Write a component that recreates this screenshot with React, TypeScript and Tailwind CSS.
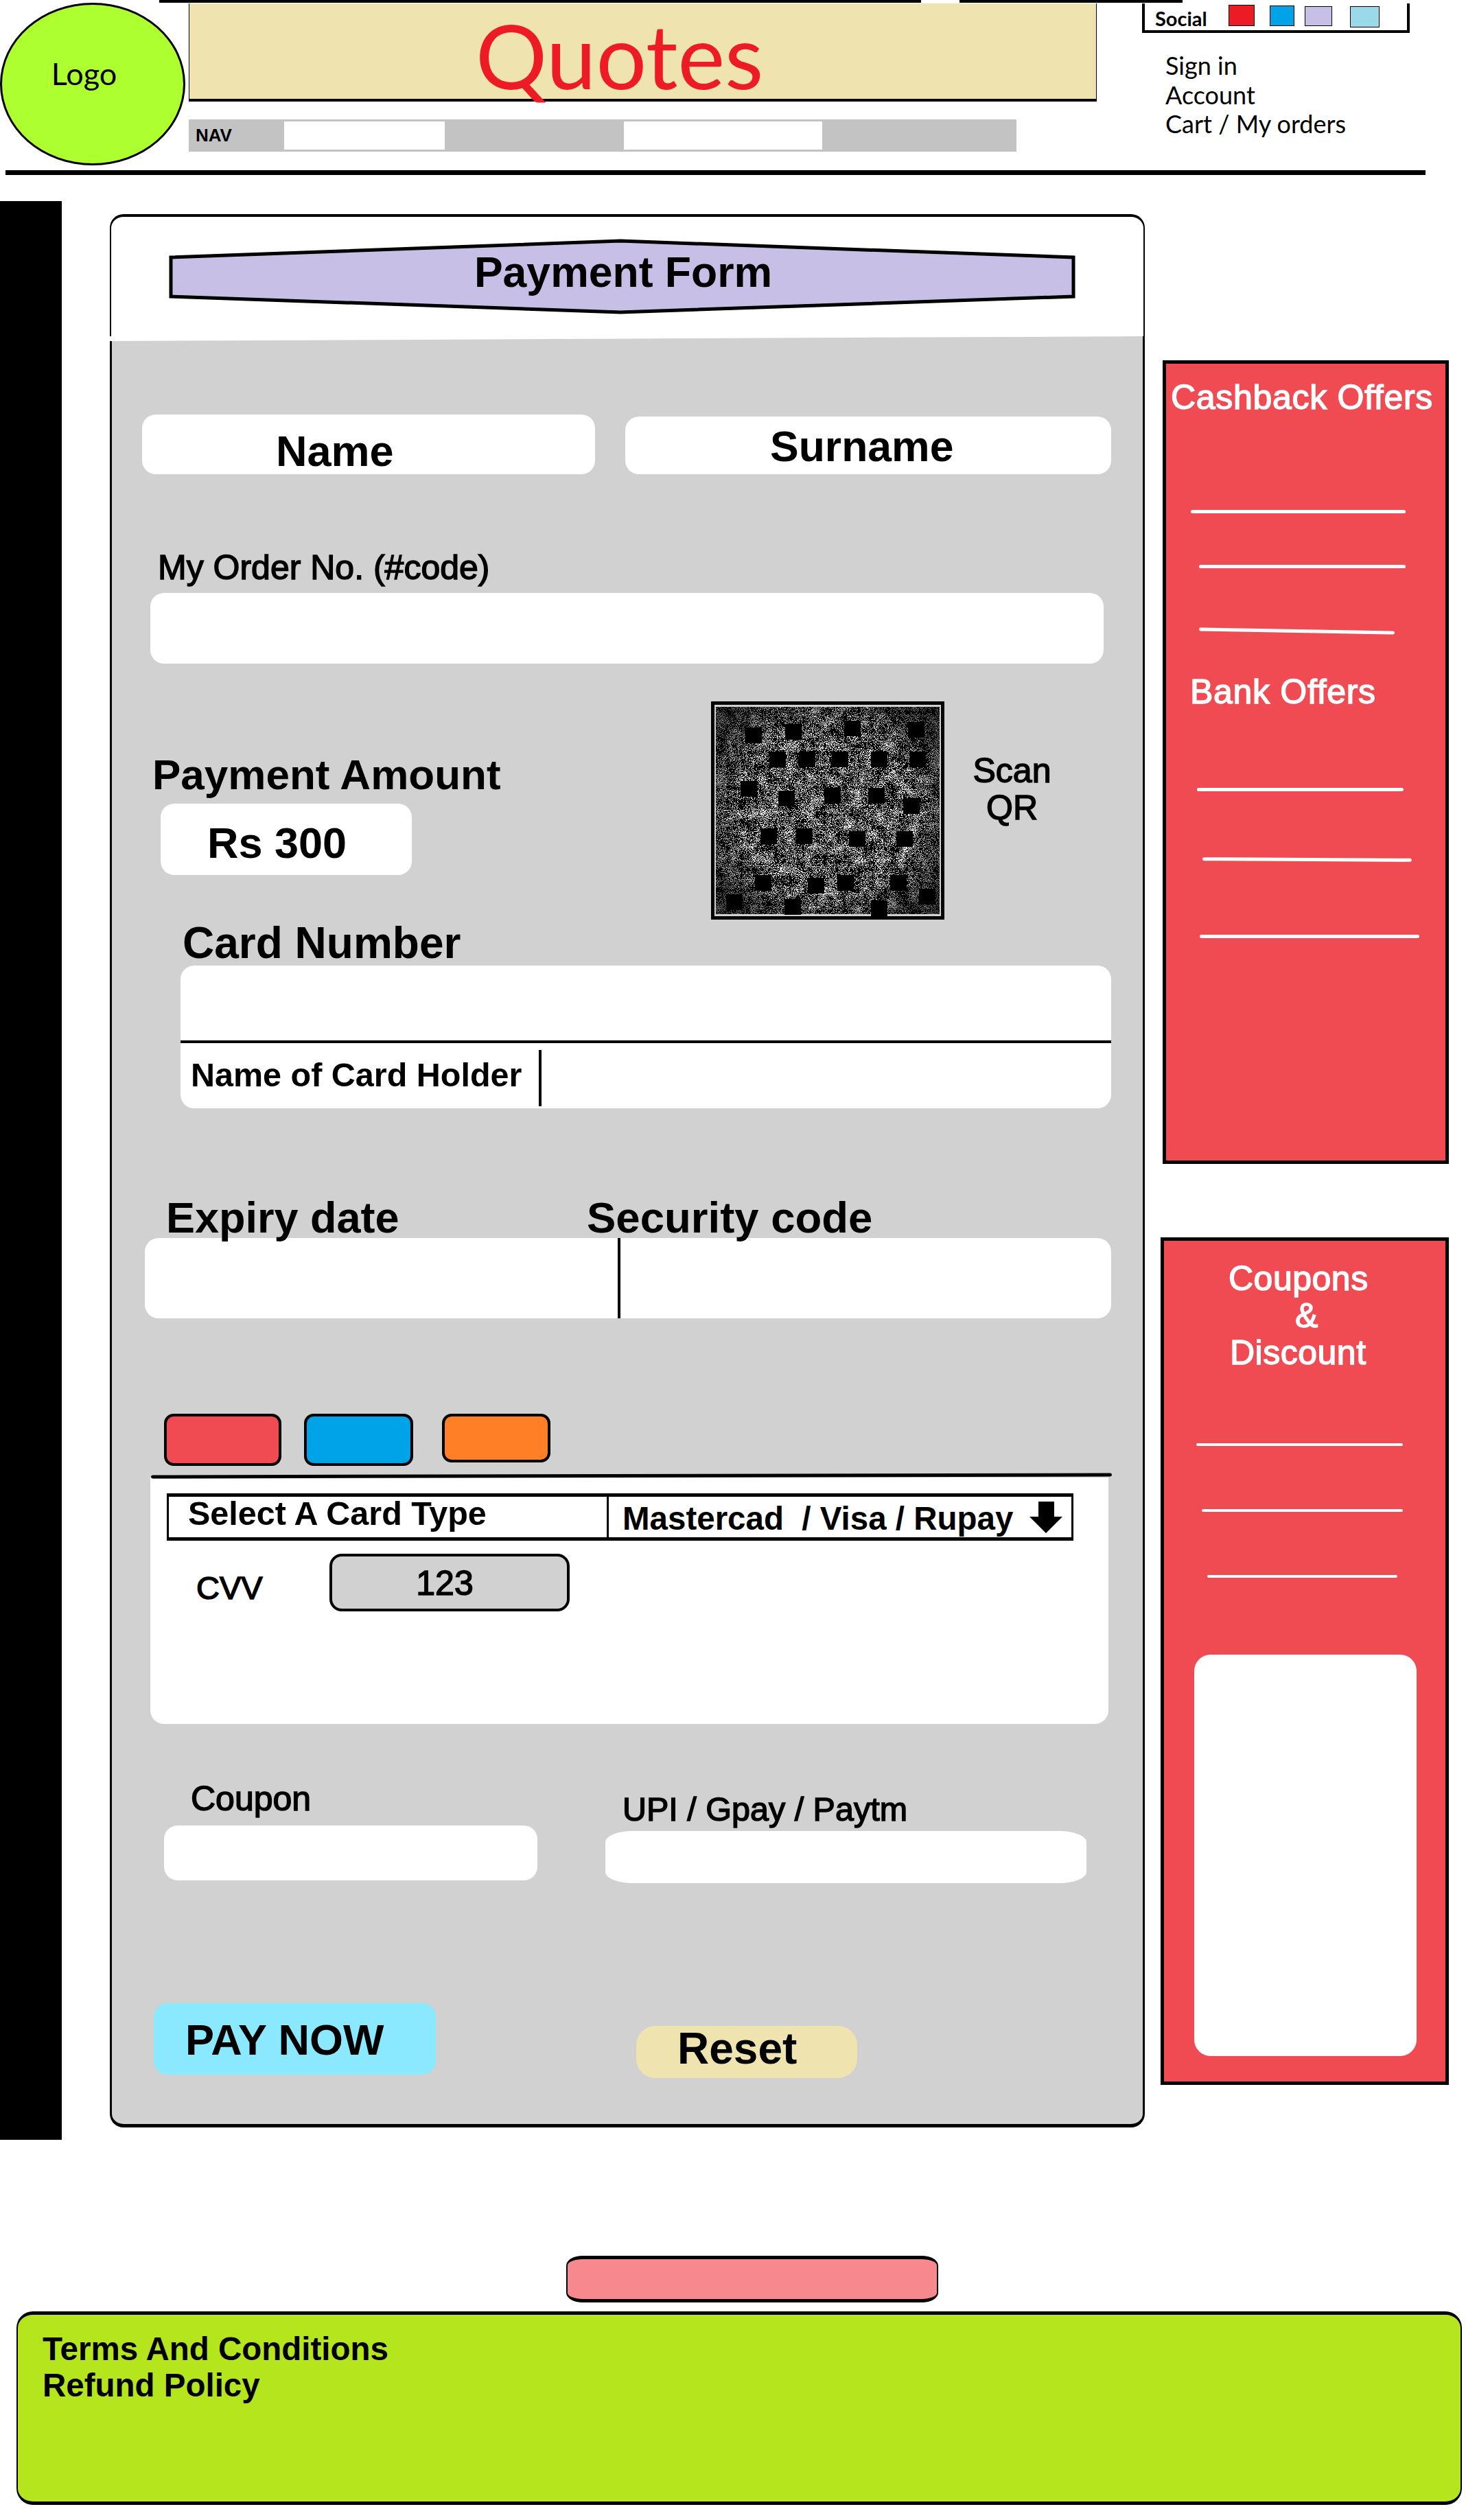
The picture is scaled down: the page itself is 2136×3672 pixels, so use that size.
const qrBlocks = [
  [45, 33], [103, 28], [189, 23], [282, 25],
  [80, 68], [123, 68], [171, 68], [228, 68], [284, 68],
  [38, 111], [93, 125], [160, 121], [224, 121], [275, 136],
  [67, 180], [119, 180], [196, 184], [265, 184],
  [59, 248], [136, 252], [179, 248], [256, 248],
  [17, 276], [102, 283], [228, 285], [298, 268],
]

const Header = () => (
  <header className="h-[255px]">
    {/* Top edge strokes */}
    <div className="flex h-[5px]">
      <div className="ml-[232px] h-[4px] w-[1110px] bg-black" />
      <div className="ml-[56px] h-[4px] w-[325px] bg-black" />
    </div>

    <div className="flex h-[243px] items-start">
      <div className="-mt-px flex h-[237px] w-[270px] items-center justify-center rounded-[50%] border-[3px] border-black bg-[#adff2f] pb-[30px] pr-[25px] font-['Lato',sans-serif] text-[45px] text-black">
        Logo
      </div>

      <div className="ml-[5px] w-[1323px]">
        <div className="h-[143px] border-x border-b-4 border-black bg-[#efe4b0] pl-[417px] pt-[10px] font-['Lato',sans-serif] text-[130px] leading-none text-[#ed1c24]">
          Quotes
        </div>
        <div className="mt-[26px] flex h-[47px] w-[1206px] items-center bg-[#c3c3c3]">
          <span className="ml-[10px] w-[129px] text-[26px] font-bold text-black">NAV</span>
          <div className="h-[41px] w-[234px] bg-white" />
          <div className="ml-[261px] h-[41px] w-[289px] bg-white" />
        </div>
      </div>

      <div className="ml-[66px]">
        <div className="flex h-[43px] w-[390px] items-start border-x-4 border-b-4 border-black">
          <span className="ml-[15px] mt-[5px] w-[107px] font-['Lato',sans-serif] text-[29px] font-bold leading-[34px] text-black">Social</span>
          <div className="mt-[2px] h-[31px] w-[38px] border border-black bg-[#ed1c24]" />
          <div className="ml-[22px] mt-[3px] h-[30px] w-[36px] border border-black bg-[#00a2e8]" />
          <div className="ml-[15px] mt-[4px] h-[29px] w-[40px] border border-black bg-[#c8bfe7]" />
          <div className="ml-[26px] mt-[4px] h-[31px] w-[43px] border border-black bg-[#99d9ea]" />
        </div>
        <div className="ml-[34px] mt-[26px] font-['Lato',sans-serif] text-[36px] leading-[42.5px] text-black">
          <div>Sign in</div>
          <div>Account</div>
          <div>Cart / My orders</div>
        </div>
      </div>
    </div>

    <div className="ml-[8px] h-[7px] w-[2069px] bg-black" />
  </header>
)

const QrCode = () => (
  <div className="h-[318px] w-[340px] shrink-0 border-[5px] border-black bg-[#d1d1d1]">
    <svg viewBox="0 0 330 308" className="block h-full w-full">
      <defs>
        <filter id="qr-noise" x="0" y="0" width="100%" height="100%" colorInterpolationFilters="sRGB">
          <feTurbulence type="fractalNoise" baseFrequency="0.9" numOctaves="2" seed="7" />
          <feColorMatrix values="1 0 0 0 0  1 0 0 0 0  1 0 0 0 0  0 0 0 0 1" result="fine" />
          <feTurbulence type="fractalNoise" baseFrequency="0.06" numOctaves="2" seed="3" />
          <feColorMatrix values="1 0 0 0 0  1 0 0 0 0  1 0 0 0 0  0 0 0 0 1" result="cloud" />
          <feComposite in="fine" in2="cloud" operator="arithmetic" k1="0" k2="0.85" k3="0.25" k4="0" />
          <feColorMatrix values="20 0 0 0 -11.5  20 0 0 0 -11.5  20 0 0 0 -11.5  0 0 0 0 1" />
        </filter>
        <radialGradient id="qr-edge" cx="50%" cy="50%" r="62%">
          <stop offset="60%" stopColor="#000" stopOpacity="0" />
          <stop offset="100%" stopColor="#000" stopOpacity="0.6" />
        </radialGradient>
      </defs>
      <rect x="2" y="3" width="326" height="302" filter="url(#qr-noise)" />
      <rect x="2" y="3" width="326" height="302" fill="url(#qr-edge)" />
      {qrBlocks.map(([x, y]) => (
        <rect key={`${x}-${y}`} x={x} y={y} width="24" height="23" fill="#000" />
      ))}
    </svg>
  </div>
)

const PaymentForm = () => (
  <div className="ml-[70px] mt-[19px] w-[1508px]">
    {/* Title area */}
    <div className="h-[178px] rounded-t-[20px] border-x-2 border-t-4 border-black bg-white pl-[84px] pt-[32px]">
      <div className="relative h-[110px] w-[1321px]">
        <svg viewBox="0 0 1321 110" className="block h-full w-full">
          <polygon points="3,27 658,3 1318,27 1318,84 658,107 3,84" fill="#c8bfe7" stroke="#000" strokeWidth="5" />
        </svg>
        <div className="absolute inset-0 flex justify-center pl-[3px] pt-[17px] text-[62.5px] font-bold leading-none text-black">
          Payment Form
        </div>
      </div>
    </div>

    {/* Fields */}
    <div className="h-[2610px] rounded-b-[20px] border-x-[3px] border-b-[5px] border-black bg-[#d1d1d1] text-black [clip-path:polygon(0_7px,100%_0,100%_100%,0_100%)]">
      <div className="flex items-start pt-[114px]">
        <div className="ml-[44px] h-[87px] w-[660px] rounded-[20px] bg-white pl-[195px] pt-[22px] text-[63px] font-bold leading-none">Name</div>
        <div className="ml-[44px] mt-[3px] h-[84px] w-[708px] rounded-[20px] bg-white pl-[211px] pt-[12px] text-[62.5px] font-bold leading-none">Surname</div>
      </div>

      <div className="ml-[67px] mt-[111px] text-[50px] leading-none [-webkit-text-stroke:1.5px_black]">My Order No. (#code)</div>
      <div className="ml-[56px] mt-[12px] h-[103px] w-[1389px] rounded-[20px] bg-white" />

      <div className="mt-[55px] flex h-[317px] items-start">
        <div className="w-[873px] shrink-0">
          <div className="ml-[59px] pt-[76px] text-[62px] font-bold leading-none">Payment Amount</div>
          <div className="ml-[71px] mt-[11px] h-[104px] w-[366px] rounded-[20px] bg-white pl-[68px] pt-[26px] text-[63px] font-bold leading-none">Rs 300</div>
        </div>
        <QrCode />
        <div className="ml-[41px] mt-[74px] w-[115px] text-center text-[50px] leading-[54px] [-webkit-text-stroke:1.5px_black]">
          Scan
          <br />
          QR
        </div>
      </div>

      <div className="ml-[103px] mt-[3px] -mb-[3px] text-[64px] font-bold leading-none">Card Number</div>
      <div className="ml-[100px] mt-[4px] h-[208px] w-[1356px] overflow-hidden rounded-[20px] bg-white">
        <div className="mt-[109px] h-[4px] bg-black" />
        <div className="flex items-start">
          <span className="ml-[15px] mt-[22px] text-[48.5px] font-bold leading-none">Name of Card Holder</span>
          <div className="ml-[25px] mt-[10px] h-[82px] w-[4px] bg-black" />
        </div>
      </div>

      <div className="ml-[79px] mt-[128px] flex text-[63px] font-bold leading-none">
        <span className="w-[613px]">Expiry date</span>
        <span className="text-[63.5px]">Security code</span>
      </div>
      <div className="ml-[48px] -mt-[3px] flex h-[117px] w-[1408px] rounded-[20px] bg-white">
        <div className="ml-[689px] h-full w-[4px] bg-black" />
      </div>

      <div className="ml-[76px] mt-[139px] flex items-start">
        <div className="h-[76px] w-[171px] rounded-[14px] border-4 border-black bg-[#f04a52]" />
        <div className="ml-[33px] h-[76px] w-[159px] rounded-[14px] border-4 border-black bg-[#00a2e8]" />
        <div className="ml-[42px] h-[71px] w-[158px] rounded-[14px] border-4 border-black bg-[#ff7f27]" />
      </div>

      {/* Card type panel */}
      <div className="ml-[57px] mt-[12px] h-[5px] w-[1400px] -rotate-[0.12deg] rounded-full bg-black" />
      <div className="ml-[56px] h-[359px] w-[1396px] rounded-b-[20px] bg-white pt-[23px]">
        <div className="ml-[24px] flex h-[69px] w-[1321px] border-x-[3px] border-y-[5px] border-black">
          <div className="w-[641px] shrink-0 border-r-[3px] border-black pl-[28px] text-[48.5px] font-bold leading-none">Select A Card Type</div>
          <div className="whitespace-pre pl-[20px] pt-[8px] text-[47.5px] font-bold leading-none">Mastercad  / Visa / Rupay</div>
          <svg viewBox="0 0 48 46" className="ml-[24px] mt-[7px] h-[46px] w-[48px] shrink-0">
            <polygon points="13,0 36,0 36,22 48,22 24,46 0,22 13,22" fill="#000" />
          </svg>
        </div>
        <div className="mt-[19px] flex items-start">
          <span className="ml-[67px] mt-[26px] w-[97px] text-[47px] leading-none [-webkit-text-stroke:1.5px_black]">CVV</span>
          <div className="ml-[97px] flex h-[84px] w-[350px] items-center justify-center rounded-[18px] border-4 border-black bg-[#d1d1d1] pr-[14px] pt-[2px] text-[50px] leading-none [-webkit-text-stroke:1.5px_black]">
            123
          </div>
        </div>
      </div>

      <div className="mt-[84px] flex items-start">
        <div className="ml-[76px] w-[544px]">
          <div className="ml-[39px] text-[50px] leading-none [-webkit-text-stroke:1.5px_black]">Coupon</div>
          <div className="mt-[14px] h-[80px] rounded-[20px] bg-white" />
        </div>
        <div className="ml-[99px] mt-[16px] w-[701px]">
          <div className="ml-[25px] text-[48.5px] leading-none [-webkit-text-stroke:1.5px_black]">UPI / Gpay / Paytm</div>
          <div className="mt-[7.5px] h-[76px] rounded-[40px/16px] bg-white" />
        </div>
      </div>

      <div className="mt-[175px] flex items-start">
        <button type="button" className="ml-[61px] h-[104px] w-[411px] rounded-[20px] bg-[#8ae9fe] pl-[46px] pt-[4px] text-left text-[63px] font-bold leading-none">PAY NOW</button>
        <button type="button" className="ml-[292px] mt-[33px] h-[76px] w-[322px] rounded-[28px] bg-[#efe4b0] pb-[10px] pl-[60px] text-left text-[64px] font-bold leading-none">Reset</button>
      </div>
    </div>
  </div>
)

const OfferRule = ({ className }: { className: string }) => (
  <div className={`rounded-full bg-white ${className}`} />
)

const OfferPanels = () => (
  <aside className="ml-[26px] mt-[232px] w-[417px] text-white">
    <div className="h-[1171px] border-[5px] border-black bg-[#f04a52]">
      <div className="ml-[7px] mt-[24px] text-[50px] leading-none tracking-[0.7px] [-webkit-text-stroke:1.5px_white]">Cashback Offers</div>
      <OfferRule className="ml-[36px] mt-[139px] h-[5px] w-[313px]" />
      <OfferRule className="ml-[48px] mt-[75px] h-[5px] w-[301px]" />
      <OfferRule className="ml-[48px] mt-[89px] h-[5px] w-[285px] rotate-1" />
      <div className="ml-[35px] mt-[61px] text-[50px] leading-none tracking-[0.7px] [-webkit-text-stroke:1.5px_white]">Bank Offers</div>
      <OfferRule className="ml-[45px] mt-[115px] h-[5px] w-[301px]" />
      <OfferRule className="ml-[53px] mt-[97px] h-[5px] w-[305px] rotate-[0.3deg]" />
      <OfferRule className="ml-[49px] mt-[107px] h-[5px] w-[320px]" />
    </div>

    <div className="-ml-[3px] mt-[107px] h-[1235px] border-[5px] border-black bg-[#f04a52]">
      <div className="mt-[28px] text-[50px] leading-[54px] tracking-[0.5px] [-webkit-text-stroke:1.5px_white]">
        <div className="ml-[94px]">Coupons</div>
        <div className="ml-[191px]">&amp;</div>
        <div className="ml-[96px]">Discount</div>
      </div>
      <OfferRule className="ml-[47px] mt-[105px] h-[4px] w-[301px]" />
      <OfferRule className="ml-[55px] mt-[92px] h-[4px] w-[293px]" />
      <OfferRule className="ml-[63px] mt-[92px] h-[4px] w-[277px]" />
      <div className="ml-[44px] mt-[112px] h-[585px] w-[324px] rounded-[24px] bg-white" />
    </div>
  </aside>
)

const Footer = () => (
  <footer>
    <div className="ml-[825px] mt-[169px] h-[68px] w-[542px] rounded-[24px/14px] border-x-2 border-y-[5px] border-black bg-[#f7898e]" />
    <div className="ml-[24px] mt-[13px] h-[282px] w-[2106px] rounded-[24px] border-x-2 border-y-[5px] border-black bg-[#b5e61d] pl-[36px] pt-[23px] text-[47.5px] font-bold leading-[53px] text-black">
      <div>Terms And Conditions</div>
      <div>Refund Policy</div>
    </div>
  </footer>
)

export default function App() {
  return (
    <div className="h-[3672px] w-[2136px] overflow-hidden bg-white font-['Liberation_Sans',Arial,sans-serif]">
      <Header />
      <main className="mt-[38px] flex h-[2825px] items-start">
        <div className="h-full w-[90px] shrink-0 bg-black" />
        <PaymentForm />
        <OfferPanels />
      </main>
      <Footer />
    </div>
  )
}
